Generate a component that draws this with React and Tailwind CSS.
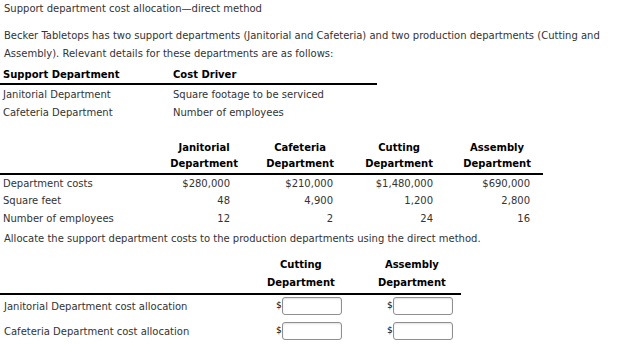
export default function App() {
  const costRows = [
    { label: 'Department costs', h: 'h-[17px]', v: ['$280,000', '$210,000', '$1,480,000', '$690,000'] },
    { label: 'Square feet', h: 'h-[17px]', v: ['48', '4,900', '1,200', '2,800'] },
    { label: 'Number of employees', h: 'h-[18px]', v: ['12', '2', '24', '16'] },
  ]
  const valPad = ['pr-[8px]', 'pr-[1px]', 'pr-0', 'pr-[1px]']
  const heads = ['Janitorial', 'Cafeteria', 'Cutting', 'Assembly']

  return (
    <div className="w-[617px] h-[357px] bg-white text-[10px] text-[#333] font-['DejaVu_Sans',sans-serif] overflow-hidden">
      <div className="pl-1 pt-[1px] leading-4">Support department cost allocation—direct method</div>

      <p className="pl-1 pr-3 mt-[10px] leading-[18px]">
        Becker Tabletops has two support departments (Janitorial and Cafeteria) and two production departments (Cutting and
        Assembly). Relevant details for these departments are as follows:
      </p>

      <div className="mt-[3px] w-[377px]">
        <div className="grid grid-cols-[170px_1fr] leading-[17px] items-center font-bold text-black border-b-2 border-black">
          <div className="pl-[3px]">Support Department</div>
          <div className="pl-[3px]">Cost Driver</div>
        </div>
        <div className="grid grid-cols-[170px_1fr] h-[18px] items-center">
          <div className="pl-[3px]">Janitorial Department</div>
          <div className="pl-[3px]">Square footage to be serviced</div>
        </div>
        <div className="grid grid-cols-[170px_1fr] h-[18px] items-center">
          <div className="pl-[3px]">Cafeteria Department</div>
          <div className="pl-[3px]">Number of employees</div>
        </div>
      </div>

      <div className="mt-[18px] w-[543px]">
        <div className="grid grid-cols-[172px_66px_96px_99px_98px_12px] pt-[1px] pb-[1px] border-b-2 border-black font-bold text-black leading-4">
          <div />
          {heads.map((h) => (
            <div key={h} className="flex justify-end">
              <div className="text-center">
                <div>{h}</div>
                <div>Department</div>
              </div>
            </div>
          ))}
          <div />
        </div>
        {costRows.map((r) => (
          <div key={r.label} className={`grid grid-cols-[172px_66px_96px_99px_98px_12px] items-center ${r.h}`}>
            <div className="pl-[3px]">{r.label}</div>
            {r.v.map((v, i) => (
              <div key={i} className={`text-right ${valPad[i]}`}>{v}</div>
            ))}
            <div />
          </div>
        ))}
      </div>

      <div className="pl-1 mt-[4px] leading-4">
        Allocate the support department costs to the production departments using the direct method.
      </div>

      <div className="mt-[9px] w-[461px]">
        <div className="grid grid-cols-[262px_90px_109px] border-b-2 border-black font-bold text-black leading-[18px] pb-[1px]">
          <div />
          <div className="pl-[5px]">
            <div className="inline-block text-center">
              <div>Cutting</div>
              <div>Department</div>
            </div>
          </div>
          <div className="pl-[26px]">
            <div className="inline-block text-center">
              <div>Assembly</div>
              <div>Department</div>
            </div>
          </div>
        </div>
        {['Janitorial Department cost allocation', 'Cafeteria Department cost allocation'].map((label) => (
          <div key={label} className="grid grid-cols-[262px_90px_109px] h-[25px] items-start pt-[2px]">
            <div className="pl-1 h-[18px] flex items-center">{label}</div>
            <div className="pl-[14px] flex items-center h-[18px]">
              <span className="text-[9px] text-black w-[6px]">$</span>
              <input type="text" className="w-[60px] h-[18px] border border-[#8f8f8f] rounded-[3px] bg-white shadow-[inset_0_1px_2px_rgba(0,0,0,0.12)] outline-none" />
            </div>
            <div className="pl-[35px] flex items-center h-[18px]">
              <span className="text-[9px] text-black w-[6px]">$</span>
              <input type="text" className="w-[60px] h-[18px] border border-[#8f8f8f] rounded-[3px] bg-white shadow-[inset_0_1px_2px_rgba(0,0,0,0.12)] outline-none" />
            </div>
          </div>
        ))}
      </div>
    </div>
  )
}
